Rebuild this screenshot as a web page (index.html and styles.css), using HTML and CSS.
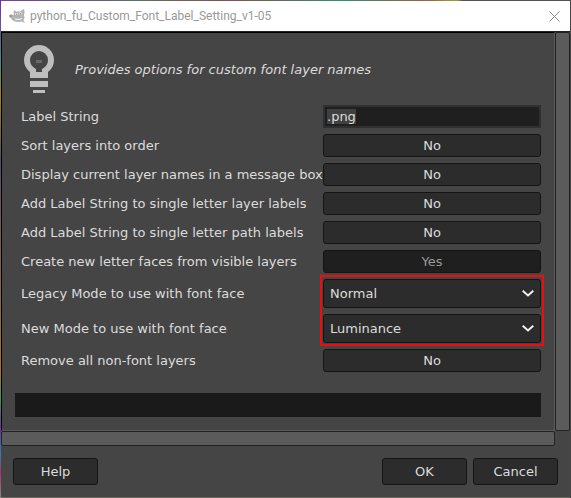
FILE: index.html
```
<!DOCTYPE html>
<html lang="en">
<head>
<meta charset="utf-8">
<title>python_fu_Custom_Font_Label_Setting_v1-05</title>
<link rel="stylesheet" href="styles.css">
</head>
<body>
<main class="dialog">
  <header class="titlebar">
    <svg class="wilber" viewBox="0 0 16 14" aria-hidden="true">
      <path fill="#b3b3b3" d="M0 6l2-.8 3 .8L4.500 3l1-2L7 2.500h4L13 1l2-1 .6 3-.6 3 .5 3-1 2 1.500 3-3-1.500L10 13l-4-.5-3-1.500L2 9 0 8z"/>
      <path fill="#fff" d="M6.500 4h2v2h-2zM10.500 3.500h2v2h-2zM6 9.500l4 .5 3-1v1l-3 1-4-.5z"/>
      <path fill="#999" d="M7 4.500h1V6H7zM11 4h1v1.500h-1zM1 6h2v2H1z"/>
    </svg>
    <h1>python_fu_Custom_Font_Label_Setting_v1-05</h1>
    <button class="close" type="button" aria-label="Close">
      <svg viewBox="0 0 11 11" aria-hidden="true"><path d="M.5.5l10 10M10.500.5l-10 10" stroke="#888" fill="none"/></svg>
    </button>
  </header>

  <form class="form">
    <div class="viewport">
      <div class="content">
        <div class="intro">
          <svg class="bulb" viewBox="0 0 30 48" aria-hidden="true">
            <path fill="#bebebe" fill-rule="evenodd" d="M15 0a15 15 0 0 1 15 15c0 5-2 9-6 12v6H6v-6c-4-3-6-7-6-12A15 15 0 0 1 15 0zm0 6a9 9 0 0 0-9 9c0 4 2 7 6 9v3h6v-3c4-2 6-5 6-9a9 9 0 0 0-9-9z"/>
            <path fill="#bebebe" d="M6 36h18v6H6zM9 45h12v3H9z"/>
            <path fill="#6a6a6a" d="M12 15h6v3h-6z"/>
          </svg>
          <p>Provides options for custom font layer names</p>
        </div>

        <div class="fields">
          <label for="label-string">Label String</label>
          <input id="label-string" class="entry" type="text" value=".png">

          <label for="sort">Sort layers into order</label>
          <button id="sort" class="toggle" type="button">No</button>

          <label for="display">Display current layer names in a message box</label>
          <button id="display" class="toggle" type="button">No</button>

          <label for="layer-labels">Add Label String to single letter layer labels</label>
          <button id="layer-labels" class="toggle" type="button">No</button>

          <label for="path-labels">Add Label String to single letter path labels</label>
          <button id="path-labels" class="toggle" type="button">No</button>

          <label for="faces">Create new letter faces from visible layers</label>
          <button id="faces" class="toggle on" type="button">Yes</button>

          <label for="legacy-mode">Legacy Mode to use with font face</label>
          <div class="combo">
            <select id="legacy-mode"><option>Normal</option></select>
            <svg viewBox="0 0 12 7" aria-hidden="true"><path d="M.7.7L6 5.500 11.300.7"/></svg>
          </div>

          <label for="new-mode">New Mode to use with font face</label>
          <div class="combo">
            <select id="new-mode"><option>Luminance</option></select>
            <svg viewBox="0 0 12 7" aria-hidden="true"><path d="M.7.7L6 5.500 11.300.7"/></svg>
          </div>

          <label for="remove">Remove all non-font layers</label>
          <button id="remove" class="toggle" type="button">No</button>

          <div class="highlight"></div>
        </div>

        <div class="progress"></div>
      </div>
      <div class="scroll-y"></div>
      <div class="scroll-x"></div>
    </div>

    <footer class="actions">
      <button class="help" type="button">Help</button>
      <button type="submit">OK</button>
      <button type="button">Cancel</button>
    </footer>
  </form>
</main>
<script>
var entry = document.querySelector('#label-string');
entry.focus();
entry.select();
</script>
</body>
</html>
```

FILE: styles.css
```
* {
  box-sizing: border-box;
}

body {
  margin: 0;
  padding: 1px;
  font: 13px/17px "DejaVu Sans", sans-serif;
  color: #dcdcdc;
  background:
    linear-gradient(#474747, #474747) right / 1px 100% no-repeat,
    linear-gradient(#7a2aa8, #4a8a8a 12%, #a08020 20%, #55506a 32%, #b07030 75%, #3a9a5a 80%, #7030a0 86%, #2a80b0 91%, #b03070 95%, #888) left / 1px 100% no-repeat,
    linear-gradient(90deg, #7040a0, #607060 25%, #805050 40%, #309070 60%, #a06040 75%, #a0a030 80%, #555 81%) top / 100% 1px no-repeat,
    #6b6b5f;
}

h1,
p {
  margin: 0;
}

button,
input,
select {
  font: inherit;
  color: inherit;
  outline: none;
}

.titlebar {
  display: flex;
  align-items: center;
  height: 30px;
  padding: 0 10px 0 8px;
  background: #fff;
}

.wilber {
  width: 16px;
  height: 14px;
}

.titlebar h1 {
  flex: 1;
  margin-left: 5px;
  font: 12px/16px Roboto, "Open Sans", sans-serif;
  color: #999;
}

.close {
  display: flex;
  padding: 0;
  border: 0;
  background: none;
}

.close svg {
  width: 11px;
  height: 11px;
}

.form {
  background: #454545;
}

.viewport {
  display: grid;
  grid-template-columns: 1fr 15px;
  border-top: 1px solid #222;
}

.content {
  padding: 12px 13px 13px;
  border: 1px solid #5a5a5a;
  border-top-color: #000;
  border-left-color: #000;
}

.scroll-y,
.scroll-x {
  border: 1px solid #222;
  border-radius: 2px;
  background: #5b5b5b;
}

.scroll-x {
  height: 15px;
}

.intro {
  display: flex;
  align-items: center;
  padding-left: 9px;
}

.intro p {
  margin-left: 21px;
  font-style: italic;
}

.bulb {
  width: 30px;
  height: 48px;
}

.fields {
  display: grid;
  position: relative;
  grid-template-columns: 296px 1fr;
  align-items: center;
  gap: 6px;
  margin-top: 12px;
  padding-left: 6px;
}

.fields label {
  white-space: nowrap;
}

.entry {
  width: 100%;
  height: 23px;
  padding: 0 2px;
  border: 2px solid #303030;
  background: #1f1f1f;
}

.entry::selection {
  color: #dcdcdc;
  background: #404040;
}

.toggle,
.combo select,
.actions button {
  border: 1px solid #151515;
  border-radius: 3px;
  background: #2c2c2c;
}

.toggle {
  width: 100%;
  height: 23px;
  padding: 0;
}

.toggle.on {
  color: #999;
  background: #1f1f1f;
}

.combo {
  display: grid;
  align-items: center;
}

.combo select,
.combo svg {
  grid-area: 1 / 1;
}

.combo select {
  width: 100%;
  height: 29px;
  padding: 0 6px;
  appearance: none;
}

.combo svg {
  justify-self: end;
  width: 12px;
  height: 7px;
  margin-right: 7px;
  fill: none;
  stroke: #eee;
  stroke-width: 2;
  pointer-events: none;
}

/* outline around both mode selectors */
.highlight {
  position: absolute;
  grid-area: 7 / 2 / 9 / 3;
  inset: -4px -3px -3px;
  border: 2px solid #f00c0c;
  pointer-events: none;
}

.progress {
  height: 24px;
  margin-top: 21px;
  background: #1a1a1a;
}

.actions {
  display: flex;
  gap: 6px;
  padding: 12px;
}

.actions button {
  width: 85px;
  height: 27px;
  padding: 0;
}

.actions .help {
  margin-right: auto;
}
```
